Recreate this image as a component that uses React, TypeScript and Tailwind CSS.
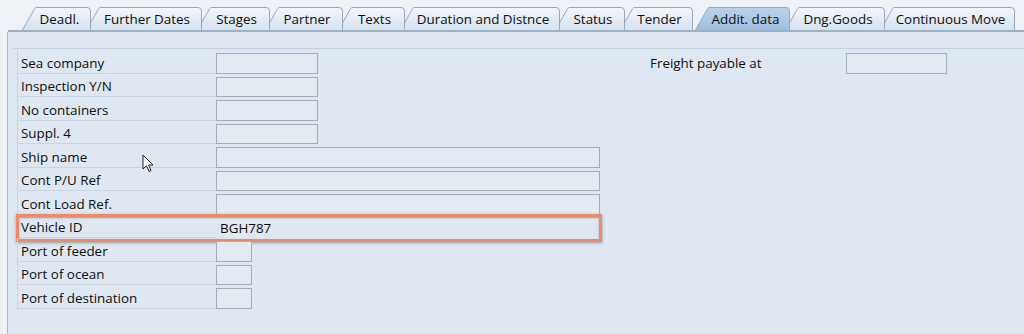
import React from "react";

type TabDef = { label: string; w: number; cls: string; active?: boolean };

// widths / overlaps read off the screenshot; earlier tabs sit on top of later ones
const tabs: TabDef[] = [
  { label: "Deadl.", w: 69, cls: "ml-[14px] z-[20]" },
  { label: "Further Dates", w: 116, cls: "-ml-[5px] z-[19]" },
  { label: "Stages", w: 73, cls: "-ml-[5px] z-[18]" },
  { label: "Partner", w: 78, cls: "-ml-[5px] z-[17]" },
  { label: "Texts", w: 67, cls: "-ml-[5px] z-[16]" },
  { label: "Duration and Distnce", w: 160, cls: "-ml-[5px] z-[15]" },
  { label: "Status", w: 70, cls: "-ml-[5px] z-[14]" },
  { label: "Tender", w: 73, cls: "-ml-[5px] z-[13]" },
  { label: "Addit. data", w: 95, cls: "ml-[2px] z-[30]", active: true },
  { label: "Dng.Goods", w: 100, cls: "-ml-[5px] z-[11]" },
  { label: "Continuous Move", w: 135, cls: "-ml-[5px] z-[10]" },
];

const H = 23;

function Tab({ t, i }: { t: TabDef; i: number }) {
  const w = t.w;
  const id = `tabfill${i}`;
  const d = `M0.5,${H} L12.5,1.8 Q13.3,0.5 15,0.5 L${w - 4},0.5 Q${w - 0.5},0.5 ${w - 0.5},4 L${w - 0.5},${H}`;
  return (
    <div className={`relative shrink-0 h-[23px] ${t.cls}`} style={{ width: w }}>
      <svg width={w} height={H} viewBox={`0 0 ${w} ${H}`} className="absolute inset-0">
        <defs>
          <linearGradient id={id} x1="0" y1="0" x2="0" y2="1">
            {t.active ? (
              <>
                <stop offset="0" stopColor="#b9d2ec" />
                <stop offset="1" stopColor="#9ebfe0" />
              </>
            ) : (
              <>
                <stop offset="0" stopColor="#f3f6fa" />
                <stop offset="1" stopColor="#d6e2ee" />
              </>
            )}
          </linearGradient>
        </defs>
        <path d={d} fill={`url(#${id})`} stroke="#93a9c0" strokeWidth="1" />
      </svg>
      <div className="relative flex h-full items-center justify-center pl-[14px] pr-[8px] pt-[2px] leading-none whitespace-nowrap">
        {t.label}
      </div>
    </div>
  );
}

type Row = { label: string; field: "short" | "long" | "tiny"; value?: string; mark?: boolean };

const rows: Row[] = [
  { label: "Sea company", field: "short" },
  { label: "Inspection Y/N", field: "short" },
  { label: "No containers", field: "short" },
  { label: "Suppl. 4", field: "short" },
  { label: "Ship name", field: "long" },
  { label: "Cont P/U Ref", field: "long" },
  { label: "Cont Load Ref.", field: "long" },
  { label: "Vehicle ID", field: "long", value: "BGH787", mark: true },
  { label: "Port of feeder", field: "tiny" },
  { label: "Port of ocean", field: "tiny" },
  { label: "Port of destination", field: "tiny" },
];

const fieldWidth = { short: "w-[102px]", long: "w-[384px]", tiny: "w-[36px]" };

function FieldRow({ r }: { r: Row }) {
  return (
    <div className="relative flex h-[23.5px]">
      <div className="flex w-[199px] items-center border-b border-l border-[#c9d4e0] pl-[3px] pt-[3px]">{r.label}</div>
      <div
        className={`mt-[3px] flex h-[20.5px] items-center border pl-[3px] pt-[1px] ${fieldWidth[r.field]} ${
          r.mark ? "border-transparent bg-transparent" : "border-[#a5afba] bg-[#e3eaf2]"
        }`}
      >
        {r.value}
      </div>
      {r.mark && (
        <div className="pointer-events-none absolute left-[-1px] top-[-1px] right-[-2px] bottom-[-4px] border-[3px] border-[#ec8b69] shadow-[0_1px_3px_rgba(60,60,60,0.45),inset_0_1px_2px_rgba(60,60,60,0.45)]" />
      )}
    </div>
  );
}

function Cursor() {
  return (
    <svg width="13" height="19" viewBox="0 0 13 19" className="absolute left-[142px] top-[154px]">
      <path d="M1,1 L1,15 L4.5,11.8 L7,17.5 L9,16.6 L6.6,11 L11,11 Z" fill="#fff" stroke="#222" strokeWidth="1" strokeLinejoin="round" />
    </svg>
  );
}

export default function App() {
  return (
    <div className="relative flex h-[334px] w-[1024px] flex-col overflow-hidden bg-[#eef2f6] font-['Open_Sans',sans-serif] text-[13.4px] text-[#0d0d0d]">
      <div className="ml-[8px] flex h-[32px] items-start border-b-2 border-[#9ab1c8] pt-[7px]">
        {tabs.map((t, i) => (
          <Tab key={t.label} t={t} i={i} />
        ))}
      </div>

      <div className="ml-[7px] flex-1 border-l border-[#a9bacb] bg-[#dfe8f2] pt-[16px]">
        <div className="ml-[5px] flex border-t border-[#c4d2df] pt-[1px]">
          <div className="ml-[4px] flex w-[583px] flex-col">
            {rows.map((r) => (
              <FieldRow key={r.label} r={r} />
            ))}
          </div>
          <div className="ml-[50px] flex h-[23.5px]">
            <div className="flex w-[196px] items-center pt-[3px]">Freight payable at</div>
            <div className="mt-[3px] h-[20.5px] w-[101px] border border-[#a5afba] bg-[#e3eaf2]" />
          </div>
        </div>
      </div>

      <Cursor />
    </div>
  );
}
